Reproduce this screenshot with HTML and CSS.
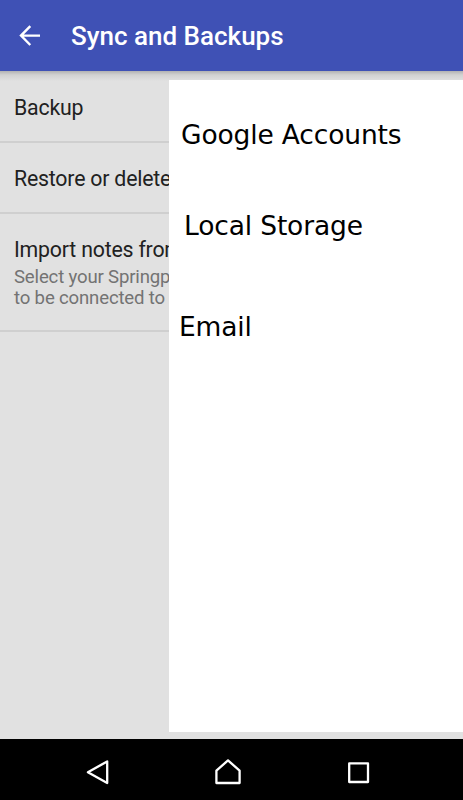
FILE: index.html
```
<!DOCTYPE html>
<html lang="en">
<head>
<meta charset="utf-8">
<title>Sync and Backups</title>
<link rel="stylesheet" href="styles.css">
</head>
<body>
<div class="screen">
  <header class="bar">
    <svg class="back" width="22" height="22" viewBox="0 0 22 22"><path d="M22 10.6H3M12.3 1.2L3 10.6l9.3 9.4"/></svg>
    <h1 class="title">Sync and Backups</h1>
  </header>
  <main class="content">
    <section class="settings">
      <div class="item">Backup</div>
      <div class="item">Restore or delete</div>
      <div class="item item-tall">Import notes from
        <p class="summary">Select your Springp<br>to be connected to</p>
      </div>
    </section>
    <section class="panel">
      <div class="option google">Google Accounts</div>
      <div class="option local">Local Storage</div>
      <div class="option email">Email</div>
    </section>
  </main>
  <nav class="nav">
    <svg width="26" height="28" viewBox="0 0 26 28"><path d="M22.2 3.4v21.6L2.9 14.2z"/></svg>
    <svg width="28" height="28" viewBox="0 0 28 28"><path d="M13 2.4L24.6 12.6v12.4H1.4V12.6z"/></svg>
    <svg width="26" height="28" viewBox="0 0 26 28"><path d="M3.2 5.4h18.8v18.6H3.2z"/></svg>
  </nav>
</div>
</body>
</html>
```

FILE: styles.css
```
* { box-sizing: border-box; }
body { margin: 0; font-family: Roboto, sans-serif; }
.screen {
  width: 463px;
  height: 800px;
  display: flex;
  flex-direction: column;
  overflow: hidden;
  background: #e1e1e1;
}
.bar {
  flex: none;
  height: 71px;
  display: flex;
  align-items: center;
  padding-left: 18px;
  gap: 31px;
  background: #3f51b5;
}
.back { fill: none; stroke: #fff; stroke-width: 2.4; }
.title { margin: 0; font-size: 26px; font-weight: 500; color: #fff; white-space: nowrap; }
.content {
  flex: 1;
  display: grid;
  grid-template-columns: 169px 1fr;
  background: linear-gradient(#b2b2b2, #d2d2d2 4px, #e1e1e1 10px);
}
.settings { overflow: hidden; padding-top: 1px; color: #212121; }
.item {
  height: 71px;
  padding: 22px 0 0 14px;
  border-bottom: 2px solid #cfcfcf;
  font-size: 21.3px;
  letter-spacing: -0.2px;
  line-height: 27px;
  white-space: nowrap;
}
.item-tall { height: 118px; }
.summary { margin: 4px 0 0; font-size: 18.6px; letter-spacing: -0.17px; line-height: 21px; color: #737373; }
.panel {
  margin: 9px 0 7px;
  padding: 37px 0 0 12px;
  background: #fff;
  color: #000;
  font-family: "DejaVu Sans", sans-serif;
  font-size: 26.5px;
  letter-spacing: -0.15px;
  line-height: 36px;
}
.local { margin: 55px 0 0 3px; }
.email { margin: 65px 0 0 -2px; }
.nav {
  flex: none;
  height: 61px;
  padding: 5px 91px 0 85px;
  display: flex;
  align-items: center;
  justify-content: space-between;
  background: #000;
}
.nav svg { fill: none; stroke: #fff; stroke-width: 2.3; stroke-linejoin: round; }
```
